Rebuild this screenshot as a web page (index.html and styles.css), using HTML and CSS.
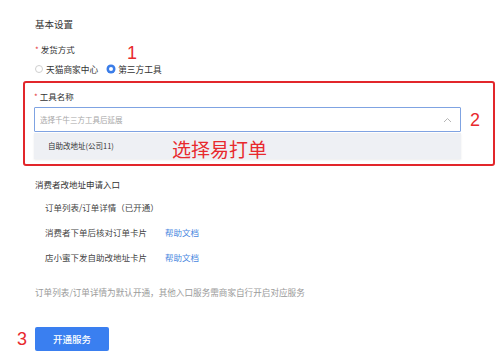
FILE: index.html
```html
<!DOCTYPE html>
<html lang="zh-CN">
<head>
    <meta charset="UTF-8">
    <meta name="viewport" content="width=device-width, initial-scale=1.0">
    <title>基本设置</title>
    <link rel="stylesheet" href="styles.css">
</head>
<body>
    <div class="page">
        <div class="title">基本设置</div>

        <div class="label"><span class="req">*</span>发货方式</div>
        <div class="radio-row">
            <label class="radio"><span class="dot"></span>天猫商家中心</label>
            <label class="radio checked"><span class="dot"></span>第三方工具</label>
            <span class="mark mark-1">1</span>
        </div>

        <div class="red-box">
            <div class="label"><span class="req">*</span>工具名称</div>
            <div class="select-row">
                <div class="select-col">
                    <div class="select">
                        <span class="placeholder">选择千牛三方工具后延展</span>
                        <svg class="chevron" width="9" height="6" viewBox="0 0 9 6">
                            <path d="M1 5 L4.5 1.5 L8 5" fill="none" stroke="#b5b5b5" stroke-width="1"/>
                        </svg>
                    </div>
                    <div class="option">
                        自助改地址(公司11)
                        <span class="hint">选择易打单</span>
                    </div>
                </div>
                <span class="mark">2</span>
            </div>
        </div>

        <div class="section-title">消费者改地址申请入口</div>
        <div class="entries">
            <div class="entry"><span class="entry-name">订单列表/订单详情（已开通）</span></div>
            <div class="entry"><span class="entry-name">消费者下单后核对订单卡片</span><a class="link" href="#">帮助文档</a></div>
            <div class="entry"><span class="entry-name">店小蜜下发自助改地址卡片</span><a class="link" href="#">帮助文档</a></div>
        </div>

        <div class="note">订单列表/订单详情为默认开通，其他入口服务需商家自行开启对应服务</div>

        <div class="action-row">
            <span class="mark">3</span>
            <button class="primary">开通服务</button>
        </div>
    </div>
</body>
</html>
```

FILE: styles.css
```css
body {
    margin: 0;
    font-family: "Noto Sans CJK SC", "Noto Sans", sans-serif;
    color: #333;
    background: #fff;
}

.page {
    padding: 17px 0 0 35px;
}

.title {
    font-size: 9.5px;
    line-height: 14px;
    color: #333;
}

.label {
    margin-top: 11px;
    font-size: 8.5px;
    line-height: 14px;
    color: #333;
}

.req {
    color: #e5393c;
    margin-right: 2px;
    font-size: 8px;
}

.radio-row {
    position: relative;
    display: flex;
    align-items: center;
    gap: 9px;
    margin-top: 5px;
    height: 14px;
}

.radio {
    display: flex;
    align-items: center;
    gap: 3px;
    font-size: 8.7px;
    color: #333;
}

.dot {
    width: 6px;
    height: 6px;
    border: 1px solid #cfcfcf;
    border-radius: 50%;
    background: #fff;
}

.radio.checked .dot {
    width: 4px;
    height: 4px;
    border: 2px solid #3b7de8;
    background: #fff;
    box-shadow: 0 0 0 0.5px #3b7de8;
}

.mark {
    color: #e8292d;
    font-family: "Liberation Sans", sans-serif;
    font-size: 18px;
    line-height: 18px;
}

.mark-1 {
    position: absolute;
    left: 92px;
    top: -16px;
    line-height: 14px;
}

.red-box {
    margin: 5px 0 0 -12px;
    width: 450px;
    padding: 0 9px 5px 9px;
    border: 2px solid #e2262b;
    border-radius: 3px;
}

.red-box .label {
    margin-top: 6px;
}

.select-row {
    display: flex;
    align-items: flex-start;
    gap: 9px;
    margin-top: 3px;
}

.select-row .mark {
    margin-top: 4px;
}

.select-col {
    width: 427px;
}

.select {
    display: flex;
    align-items: center;
    justify-content: space-between;
    height: 23px;
    padding: 0 8px 0 5px;
    border: 1px solid #7fa3e2;
    border-radius: 1px;
}

.placeholder {
    font-size: 7.5px;
    color: #a8a8a8;
}

.option {
    position: relative;
    margin-top: 1px;
    height: 26px;
    line-height: 26px;
    padding-left: 14px;
    font-size: 7.5px;
    color: #333;
    background: #eef0f4;
    box-shadow: 0 1px 2px rgba(0, 0, 0, 0.08);
}

.hint {
    position: absolute;
    left: 138px;
    top: 4px;
    font-size: 19px;
    line-height: 24px;
    color: #e8292d;
}

.section-title {
    margin-top: 11px;
    font-size: 8.5px;
    line-height: 14px;
    color: #333;
}

.entries {
    margin-top: 4px;
    padding-left: 10px;
}

.entry {
    display: flex;
    height: 25px;
    line-height: 25px;
    font-size: 8.5px;
    color: #444;
}

.entry-name {
    width: 120px;
}

.link {
    color: #4a87e0;
    text-decoration: none;
}

.note {
    margin-top: 15px;
    font-size: 8.6px;
    line-height: 14px;
    color: #9a9a9a;
}

.action-row {
    display: flex;
    align-items: center;
    gap: 8px;
    margin: 28px 0 0 -18px;
}

.primary {
    width: 74px;
    height: 24px;
    border: none;
    border-radius: 2px;
    background-color: #3a7ff0;
    color: #fff;
    font-family: "Noto Sans CJK SC", sans-serif;
    font-size: 9.5px;
    font-weight: 500;
    cursor: pointer;
}
```
